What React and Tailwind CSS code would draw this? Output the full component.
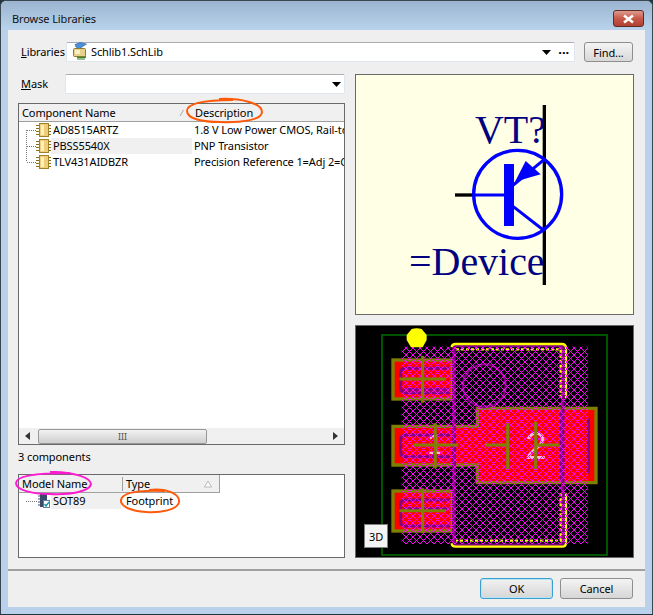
const font = "font-['Noto_Sans','Open_Sans',sans-serif]";

const ChipIcon = ({ tree }) => (
    <svg width="32" height="16" viewBox="0 0 32 16" className="shrink-0">
        <g stroke="#777" strokeDasharray="1 1" fill="none" shapeRendering="crispEdges">
            {tree === 'top' && <path d="M7.5 8V16" />}
            {tree === 'mid' && <path d="M7.5 0V16" />}
            {tree === 'end' && <path d="M7.5 0V8" />}
            <path d="M7.5 8.5H17" />
        </g>
        <g fill="#8a6a1c" shapeRendering="crispEdges">
            <rect x="17" y="3" width="4" height="1" />
            <rect x="17" y="6" width="4" height="1" />
            <rect x="17" y="9" width="4" height="1" />
            <rect x="17" y="12" width="4" height="1" />
            <rect x="29" y="3" width="3" height="1" />
            <rect x="29" y="6" width="3" height="1" />
            <rect x="29" y="9" width="3" height="1" />
            <rect x="29" y="12" width="3" height="1" />
        </g>
        <rect x="20.5" y="1.5" width="9" height="13" fill="#f0cd78" stroke="#a08028" shapeRendering="crispEdges" />
        <rect x="22" y="3" width="3" height="10" fill="#fff0c0" />
    </svg>
);

const FootprintIcon = () => (
    <svg width="32" height="16" viewBox="0 0 32 16" className="shrink-0">
        <path d="M7 8.5H18" stroke="#777" strokeDasharray="1 1" fill="none" shapeRendering="crispEdges" />
        <rect x="21" y="1" width="7" height="13" fill="#3b4a6b" />
        <path d="M19 3h2M19 6h2M19 9h2M19 12h2" stroke="#3b4a6b" />
        <rect x="24.5" y="7.5" width="6" height="7" fill="#fff" stroke="#5b7fa8" shapeRendering="crispEdges" />
        <path d="M25.5 11l1.5 2 3-4" stroke="#1a9a9a" strokeWidth="1.4" fill="none" />
    </svg>
);

const LibraryIcon = () => (
    <svg width="20" height="20" viewBox="0 0 20 20" className="shrink-0">
        <path d="M5 2.5 L10 0.5 L16.5 2 L12 5 L9 7 L6 5Z" fill="#4a90d9" stroke="#2a5f9e" strokeWidth="0.6" />
        <path d="M7 14h9v2H7z" fill="#3f8f2f" />
        <path d="M8 15v3M10 15v3M12 15v3M14 15v3" stroke="#2f7f24" />
        <rect x="3.5" y="6.5" width="12" height="8" rx="1" fill="#e6d28a" stroke="#8d7a34" />
        <rect x="5" y="8" width="5" height="4" fill="#f8efc6" />
    </svg>
);

const Arrow = () => (
    <svg width="9" height="5" viewBox="0 0 9 5" className="shrink-0">
        <path d="M0 0H9L4.5 5Z" fill="#000" />
    </svg>
);

const SortMark = ({ up }) => (
    <svg width="8" height="8" viewBox="0 0 8 8" className="shrink-0">
        {up ? (
            <path d="M4 1L7.5 7H.5Z" fill="#fff" stroke="#a8a8a8" strokeWidth="0.8" />
        ) : (
            <path d="M2 7L5.5 1" stroke="#a8a8a8" strokeWidth="1" fill="none" />
        )}
    </svg>
);

const Row = ({ tree, name, description, selected }) => (
    <div className="flex h-4 items-center whitespace-nowrap">
        <ChipIcon tree={tree} />
        <div className={`h-4 w-[141px] shrink-0 pl-[2px] leading-4 ${selected ? 'bg-[#f0f0f0]' : ''}`}>{name}</div>
        <div className="pl-[2px] leading-4">{description}</div>
    </div>
);

const PcbView = () => (
    <svg viewBox="18 18 831 693" className="block h-full w-full">
        <defs>
            <pattern id="hatch" width="21" height="21" patternUnits="userSpaceOnUse">
                <path d="M-3 3L3 -3M-3 24L24 -3M18 24L24 18M-3 -3L24 24M18 -3L24 3M-3 18L3 24" stroke="#ff00ff" strokeWidth="3.4" fill="none" shapeRendering="crispEdges" />
            </pattern>
        </defs>
        <rect x="18" y="18" width="831" height="693" fill="#000" />

        {/* pads */}
        <g fill="#ff0000" stroke="#808000" strokeWidth="10">
            <rect x="129" y="120" width="178" height="117" />
            <rect x="129" y="513" width="178" height="120" />
            <path d="M129 319H382V265H738V488H382V435H129Z" />
        </g>

        {/* purple paste lines */}
        <g fill="none" stroke="#800080" strokeWidth="9">
            <path d="M300 145H166Q152 145 152 160V205Q152 218 166 218H300" />
            <path d="M300 345H166Q152 345 152 360V395Q152 410 166 410H300" />
            <path d="M300 540H166Q152 540 152 553V605Q152 618 166 618H300" />
            <path d="M634 270V482M715 295V460" />
            <path d="M160 208H300M160 566H300" />
            <circle cx="403" cy="197" r="64" strokeWidth="7" />
            <path d="M312 76H638V676H312Z" strokeWidth="11" />
        </g>

        {/* silk outline */}
        <g fill="none" stroke="#ffff00" strokeWidth="7">
            <path d="M648 235V85Q648 72 635 72H318Q305 72 305 82" />
            <path d="M648 520V668Q648 680 635 680H318Q305 680 305 670" />
        </g>
        <g fill="none" stroke="#ffff00" strokeWidth="7" strokeDasharray="9 6">
            <path d="M318 88H632V235" />
            <path d="M632 520V662H318" />
        </g>

        <text x="256" y="402" fontSize="88" textAnchor="middle" fill="#ffb6d9" fontFamily="'Liberation Sans', sans-serif">1</text>
        <text x="558" y="418" fontSize="118" textAnchor="middle" fill="#ffb6d9" fontFamily="'Liberation Sans', sans-serif">2</text>

        {/* hatch over everything in the courtyard */}
        <rect x="155" y="80" width="558" height="592" fill="url(#hatch)" />

        {/* pad crosses */}
        <g stroke="#808000" strokeWidth="9" fill="none">
            <path d="M218 108V248M148 177H288" />
            <path d="M256 310V445M190 375H325" />
            <path d="M473 310V447M405 375H478" />
            <path d="M557 305V447M557 375H628" />
            <path d="M218 505V640M148 572H288" />
        </g>

        <rect x="96" y="45" width="675" height="660" fill="none" stroke="#006400" strokeWidth="5" />
        <path d="M185 27Q200 22 215 27L230 45V60L218 82H183L170 60V45Z" fill="#ffff00" />
    </svg>
);

const SchematicView = () => (
    <svg viewBox="18 225 831 717" className="block h-full w-full">
        <rect x="18" y="225" width="831" height="717" fill="#ffffe6" />
        <path d="M583 315V855" stroke="#000" strokeWidth="10" />
        <path d="M315 585H370" stroke="#000" strokeWidth="10" />
        <text x="375" y="428" fontSize="120" fill="#000080" fontFamily="'Liberation Serif', serif">VT?</text>
        <text x="177" y="825" fontSize="120" fill="#000080" fontFamily="'Liberation Serif', serif">=Device</text>
        <circle cx="503" cy="583" r="132" fill="none" stroke="#0000ff" strokeWidth="10" />
        <path d="M370 585H470" stroke="#0000ff" strokeWidth="9" />
        <rect x="462" y="492" width="30" height="186" fill="#0000ff" />
        <path d="M490 555L583 478" stroke="#0000ff" strokeWidth="9" />
        <path d="M490 620L580 690" stroke="#0000ff" strokeWidth="9" />
        <path d="M527 483L572 523L495 545Z" fill="#0000ff" />
    </svg>
);

export default function App() {
    return (
        <div className={`relative h-[615px] w-[653px] overflow-hidden bg-[#1f3340] text-[11px] tracking-[-0.1px] text-black ${font}`}>
            <div className="flex h-[614px] w-[653px] flex-col rounded-t-[6px] border-x border-t border-[#3a4650] bg-[#b9d1ea]">
                <div className="flex h-[29px] shrink-0 items-start justify-between rounded-t-[6px] bg-gradient-to-b from-[#9bb5d0] to-[#b9d3ec] pl-[11px] pr-[8px]">
                    <span className="mt-[10px] leading-4 text-[#111]">Browse Libraries</span>
                    <div className="mt-[9px] flex h-[17px] w-[31px] items-center justify-center rounded-[3px] border border-[#5e2a24] bg-gradient-to-b from-[#dc9a8e] via-[#c8584a] to-[#b04030]">
                        <svg width="13" height="10" viewBox="0 0 13 10">
                            <path d="M2 1.5L11 8.5M11 1.5L2 8.5" stroke="#fff" strokeWidth="2.6" />
                        </svg>
                    </div>
                </div>

                <div className="mx-[7px] flex flex-1 flex-col bg-[#efefef]">
                    <div className="flex-1 pl-[10px] pr-[11px] pt-[12px]">
                        <div className="flex h-5 items-center">
                            <label className="w-[48px] shrink-0 pl-[3px]"><u>L</u>ibraries</label>
                            <div className="flex h-5 w-[509px] items-center rounded-[2px] border border-[#dfe6ee] border-t-[#abadb3] bg-white pl-[3px] pr-[4px]">
                                <LibraryIcon />
                                <span className="ml-[1px] flex-1">Schlib1.SchLib</span>
                                <Arrow />
                                <span className="ml-[7px] mr-[1px] text-[13px] font-bold leading-none">···</span>
                            </div>
                            <button className="ml-[9px] h-[20px] w-[49px] rounded-[3px] border border-[#8e8e8e] bg-gradient-to-b from-[#f4f4f4] to-[#d8d8d8] leading-none">Find...</button>
                        </div>

                        <div className="mt-[12px] flex gap-[10px]">
                            <div className="w-[327px] shrink-0">
                                <div className="flex h-5 items-center">
                                    <label className="w-[47px] shrink-0 pl-[3px]"><u>M</u>ask</label>
                                    <div className="flex h-5 flex-1 items-center justify-end rounded-[2px] border border-[#dfe6ee] border-t-[#abadb3] bg-white pr-[3px]">
                                        <Arrow />
                                    </div>
                                </div>

                                <div className="mt-[9px] flex h-[342px] flex-col overflow-hidden border border-[#696969] bg-white">
                                    <div className="flex h-[18px] shrink-0 items-center border-b border-[#a0a0a0] bg-[#f0f0f0] pt-[1px]">
                                        <div className="flex w-[169px] shrink-0 items-center justify-between pl-[3px] pr-[2px]">
                                            Component Name
                                            <SortMark />
                                        </div>
                                        <div className="pl-[7px]">Description</div>
                                    </div>
                                    <div className="flex-1 overflow-hidden">
                                        <Row tree="top" name="AD8515ARTZ" description="1.8 V Low Power CMOS, Rail-to-Rail Output" />
                                        <Row tree="mid" name="PBSS5540X" description="PNP Transistor" selected />
                                        <Row tree="end" name="TLV431AIDBZR" description="Precision Reference 1=Adj 2=Cathode 3=Anode" />
                                    </div>
                                    <div className="flex h-[16px] shrink-0 items-center bg-[#f0f0f0] pl-[6px] pr-[6px]">
                                        <svg width="5" height="8" viewBox="0 0 5 8"><path d="M5 0V8L0 4Z" fill="#333" /></svg>
                                        <div className="ml-[8px] flex h-[15px] w-[169px] items-center justify-center rounded-[2px] border border-[#979797] bg-gradient-to-b from-[#f2f2f2] to-[#cfcfcf] text-[9px] leading-none text-[#555]">
                                            III
                                        </div>
                                        <div className="flex-1" />
                                        <svg width="5" height="8" viewBox="0 0 5 8"><path d="M0 0V8L5 4Z" fill="#333" /></svg>
                                    </div>
                                </div>

                                <div className="flex h-[29px] items-start pt-[4px] leading-4">3 components</div>

                                <div className="h-[84px] overflow-hidden border border-[#696969] bg-white">
                                    <div className="flex h-[18px] w-[201px] items-center border-b border-r border-[#a0a0a0] bg-[#f0f0f0] pt-[1px]">
                                        <div className="w-[104px] shrink-0 border-r border-[#a0a0a0] pl-[3px] leading-[14px]">Model Name</div>
                                        <div className="flex flex-1 items-center justify-between pl-[3px] pr-[7px]">
                                            Type
                                            <SortMark up />
                                        </div>
                                    </div>
                                    <div className="flex h-4 items-center whitespace-nowrap">
                                        <FootprintIcon />
                                        <div className="h-4 w-[70px] shrink-0 bg-[#f0f0f0] pl-[2px] leading-4">SOT89</div>
                                        <div className="pl-[5px] leading-4">Footprint</div>
                                    </div>
                                </div>
                            </div>

                            <div className="flex w-[279px] shrink-0 flex-col gap-[10px]">
                                <div className="h-[241px] border border-[#696969]">
                                    <SchematicView />
                                </div>
                                <div className="relative h-[233px] border border-[#696969]">
                                    <PcbView />
                                    <div className="absolute left-[8px] bottom-[9px] flex h-[24px] w-[24px] items-center justify-center border border-[#808080] bg-[#f4f4f4] leading-none">3D</div>
                                </div>
                            </div>
                        </div>
                    </div>

                    <div className="flex h-[38px] shrink-0 justify-end gap-[7px] border-t-2 border-[#a0a0a0] pr-[12px] pt-[7px]">
                        <button className="h-[21px] w-[73px] rounded-[3px] border border-[#3c9fd0] bg-gradient-to-b from-[#f2f2f2] to-[#d6d6d6] leading-none shadow-[inset_0_0_0_1px_#b8e4f8]">OK</button>
                        <button className="h-[21px] w-[73px] rounded-[3px] border border-[#8e8e8e] bg-gradient-to-b from-[#f4f4f4] to-[#d6d6d6] leading-none">Cancel</button>
                    </div>
                </div>
                <div className="h-[7px] shrink-0" />
            </div>

            {/* hand drawn marks on top of the screenshot */}
            <svg className="pointer-events-none absolute left-0 top-0" width="653" height="615" viewBox="0 0 653 615" fill="none" strokeWidth="2">
                <path d="M219 99C240 98 262 103 262 112C262 120 240 123 220 122C203 122 187 119 187 111C187 103 205 100 233 100" stroke="#ff5a0a" />
                <path d="M149 490C165 488 180 493 179 502C178 510 160 513 146 512C132 511 120 507 121 500C122 492 140 490 165 491" stroke="#ff5a0a" />
                <path d="M50 472C72 471 91 478 91 484C90 491 72 495 50 494C32 494 16 490 16 483C16 476 35 473 70 473" stroke="#ff19d0" />
            </svg>
        </div>
    );
}
